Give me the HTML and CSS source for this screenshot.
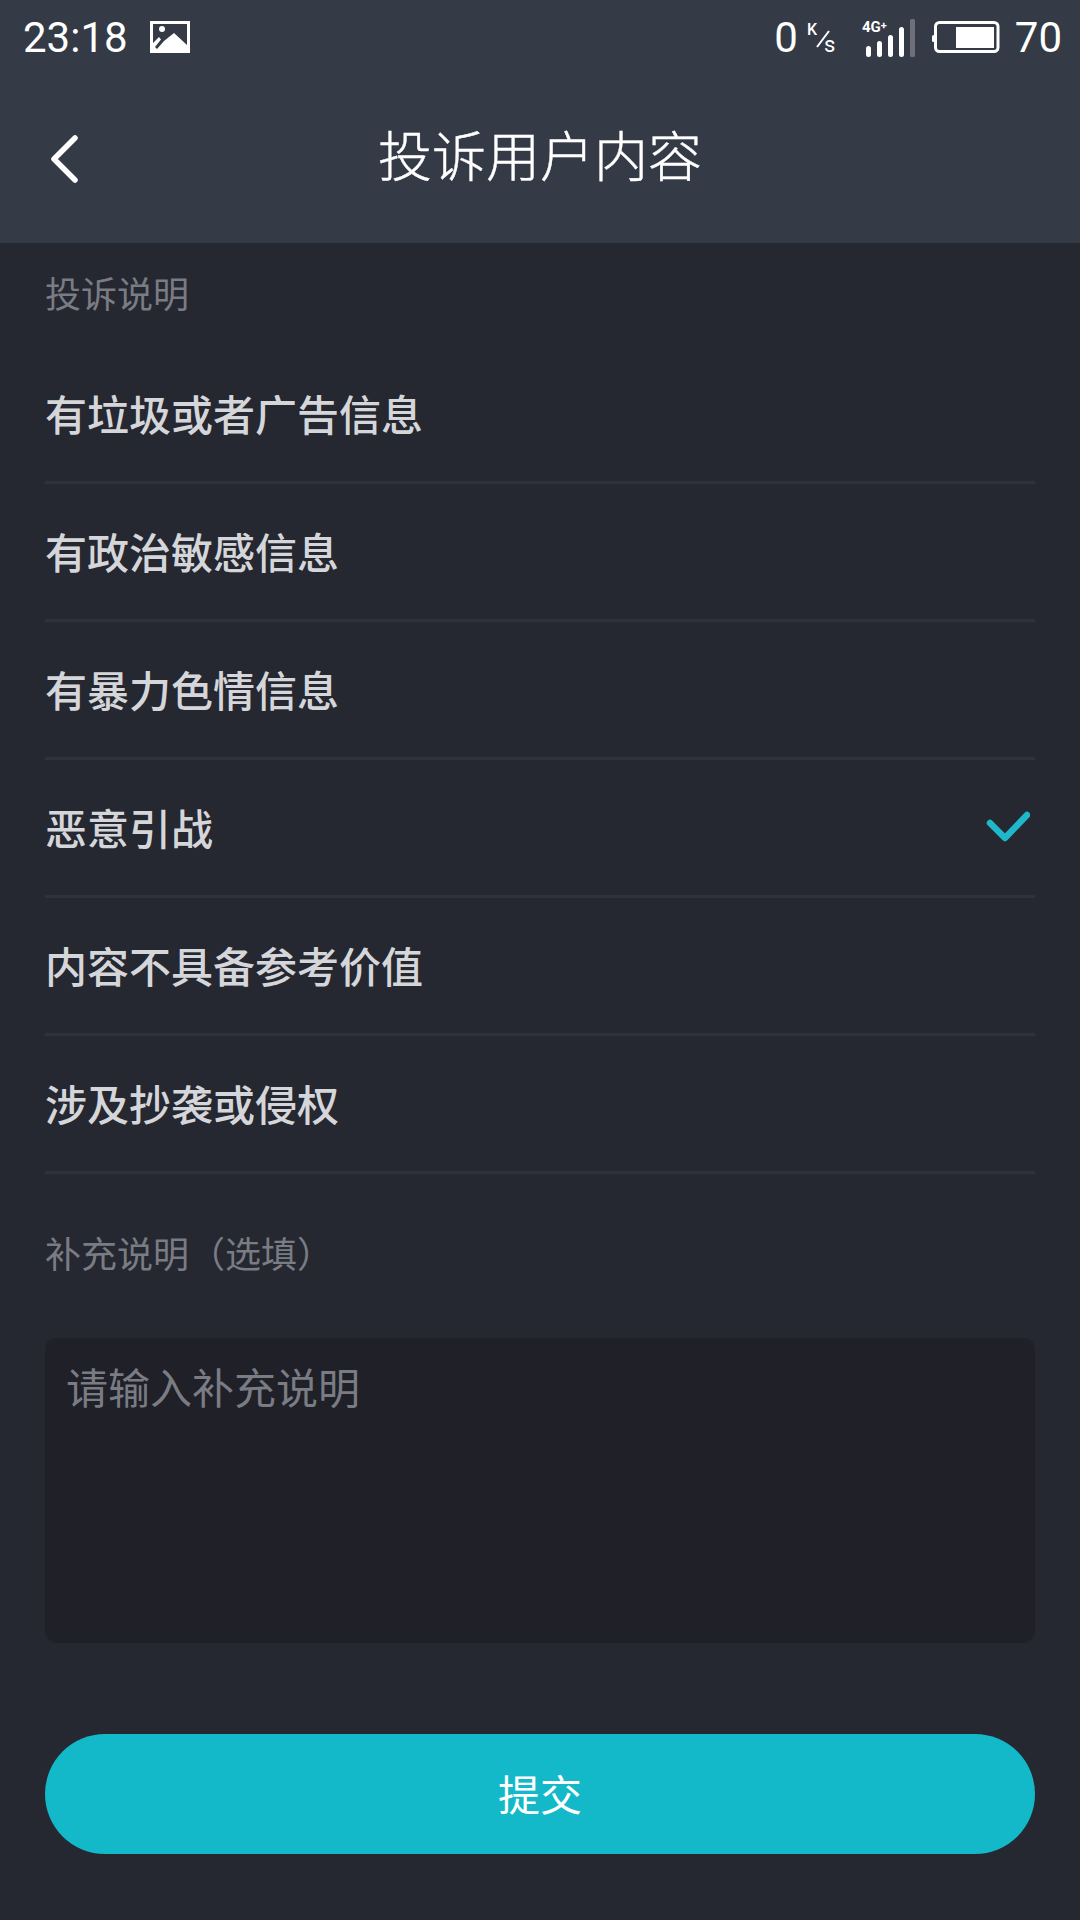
FILE: index.html
```html
<!DOCTYPE html>
<html lang="zh-CN">
<head>
  <meta charset="UTF-8">
  <meta name="viewport" content="width=device-width, initial-scale=1.0">
  <title>投诉用户内容</title>
  <link rel="stylesheet" href="styles.css">
</head>
<body>
  <div id="container">
    <header class="top">
      <div class="status">
        <div class="status-left">
          <span class="time">23:18</span>
          <svg class="pic-icon" width="40" height="32" viewBox="0 0 40 32">
            <path fill="#fff" fill-rule="evenodd" d="M0 0H40V32H0ZM3 3H37V24L24 12 14 20 7 28 5 26 11 18.500 9 16 3 22Z"/>
            <circle cx="12" cy="8" r="3" fill="#fff"/>
          </svg>
        </div>
        <div class="status-right">
          <span class="speed">0</span>
          <svg class="speed-unit" width="34" height="40" viewBox="0 -3 34 40">
            <text x="1" y="15" class="unit-k">K</text>
            <line x1="11" y1="27" x2="23" y2="11" stroke="#fff" stroke-width="2"/>
            <text x="18" y="32" class="unit-s">s</text>
          </svg>
          <svg class="signal" width="56" height="42" viewBox="0 0 56 42">
            <text x="2" y="16" class="net-text">4G<tspan class="net-plus" dy="-3">+</tspan></text>
            <rect x="6" y="30" width="5" height="11" rx="2.500" fill="#fff"/>
            <rect x="17" y="25" width="5" height="16" rx="2.500" fill="#fff"/>
            <rect x="28" y="19" width="5" height="22" rx="2.500" fill="#fff"/>
            <rect x="39" y="11" width="5" height="30" rx="2.500" fill="#fff"/>
            <rect x="50" y="3" width="5" height="38" rx="1.500" fill="#6d7079"/>
          </svg>
          <svg class="battery" width="68" height="34" viewBox="0 0 68 34">
            <rect x="3.500" y="2.500" width="62.500" height="29" rx="4" fill="none" stroke="#fff" stroke-width="3"/>
            <rect x="24" y="7" width="38" height="21" fill="#fff"/>
            <rect x="0" y="15" width="3" height="7" rx="1.500" fill="#fff"/>
          </svg>
          <span class="level">70</span>
        </div>
      </div>
      <nav class="nav">
        <svg class="back" width="30" height="50" viewBox="0 0 30 50">
          <path d="M26 4 5 25l21 21" fill="none" stroke="#fff" stroke-width="5.500" stroke-linecap="round" stroke-linejoin="round"/>
        </svg>
        <h1>投诉用户内容</h1>
      </nav>
    </header>

    <main class="content">
      <p class="label first">投诉说明</p>
      <ul class="reasons">
        <li>有垃圾或者广告信息</li>
        <li>有政治敏感信息</li>
        <li>有暴力色情信息</li>
        <li>恶意引战
          <svg class="check" width="46" height="34" viewBox="0 0 46 34">
            <path d="M6 13 21 28 43 5" fill="none" stroke="#1fb8ca" stroke-width="6.500" stroke-linecap="round" stroke-linejoin="round"/>
          </svg>
        </li>
        <li>内容不具备参考价值</li>
        <li>涉及抄袭或侵权</li>
      </ul>
      <p class="label second">补充说明（选填）</p>
      <div class="textbox">请输入补充说明</div>
      <button class="submit" type="submit">提交</button>
    </main>
  </div>
</body>
</html>
```

FILE: styles.css
```css
* {
  box-sizing: border-box;
}

body {
  font-family: 'Noto Sans CJK SC', 'Noto Sans', sans-serif;
  background-color: #252731;
  margin: 0;
  padding: 0;
}

#container {
  width: 1080px;
  height: 1920px;
  overflow: hidden;
}

.top {
  height: 243px;
  background-color: #343a46;
  color: #fff;
}

.status {
  height: 74px;
  display: flex;
  justify-content: space-between;
  align-items: center;
  padding: 0 18px 0 23px;
  font-family: 'Roboto', sans-serif;
  font-size: 42px;
  font-weight: 400;
}

.status-left,
.status-right {
  display: flex;
  align-items: center;
}

.pic-icon {
  margin-left: 22px;
}

.speed-unit {
  margin-left: 8px;
}

.unit-k {
  font-family: 'Roboto', sans-serif;
  font-size: 16px;
  font-weight: 500;
  fill: #fff;
}

.unit-s {
  font-family: 'Roboto', sans-serif;
  font-size: 22px;
  font-weight: 400;
  fill: #fff;
}

.signal {
  margin-left: 20px;
}

.net-text {
  font-family: 'Roboto', sans-serif;
  font-size: 15px;
  font-weight: 700;
  fill: #fff;
}

.net-plus {
  font-size: 11px;
}

.battery {
  margin-left: 16px;
}

.level {
  margin-left: 15px;
}

.nav {
  height: 169px;
  display: grid;
  grid-template-columns: 1fr auto 1fr;
  align-items: center;
  padding-left: 49px;
}

.nav h1 {
  grid-column: 2;
  margin: 0 49px 10px 0;
  font-size: 54px;
  font-weight: 300;
  line-height: 1;
  -webkit-text-stroke: 0.4px #fff;
}

.back {
  grid-column: 1;
  grid-row: 1;
}

.content {
  padding: 0 45px;
}

.label {
  margin: 0;
  color: #7a7c84;
  font-size: 36px;
  line-height: 50px;
}

.label.first {
  padding-top: 24px;
  height: 103px;
}

.label.second {
  margin-top: 53px;
}

.reasons {
  list-style: none;
  margin: 0;
  padding: 0;
}

.reasons li {
  height: 138px;
  display: flex;
  justify-content: space-between;
  align-items: center;
  padding: 0 5px 2px 0;
  border-bottom: 3px solid #2f323c;
  color: #d5d6d9;
  font-size: 42px;
  font-weight: 500;
}

.textbox {
  height: 305px;
  margin-top: 61px;
  padding: 18px 21px;
  background-color: #1f2028;
  border-radius: 12px;
  color: #7a7c84;
  font-size: 42px;
  line-height: 60px;
}

.submit {
  display: block;
  width: 100%;
  height: 120px;
  margin-top: 91px;
  padding: 0 0 4px;
  border: none;
  border-radius: 60px;
  background-color: #13b9c9;
  color: #fff;
  font-family: inherit;
  font-size: 42px;
}
```
